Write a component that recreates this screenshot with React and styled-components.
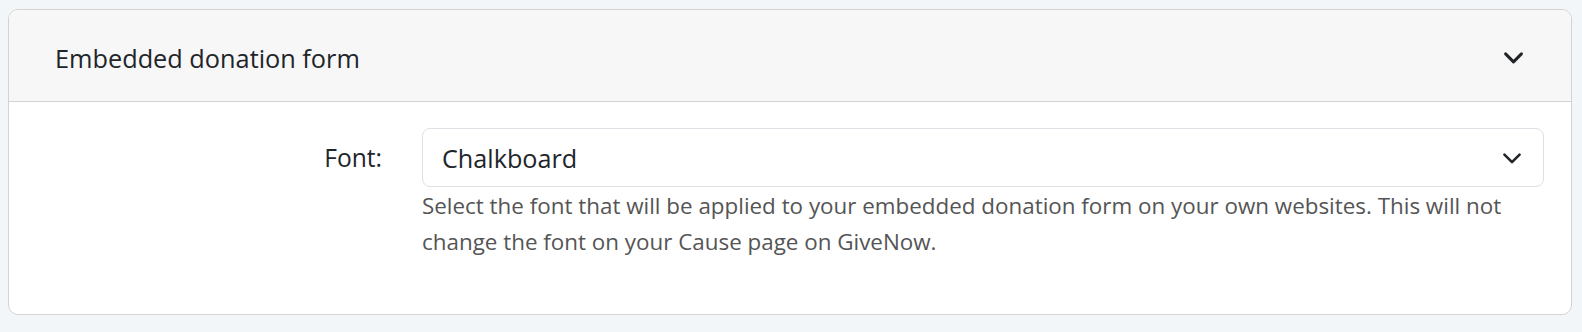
import React from 'react';
import styled, { createGlobalStyle } from 'styled-components';

const GlobalStyle = createGlobalStyle`
  html, body {
    margin: 0;
    padding: 0;
    overflow: hidden;
    background: #f3f6f9;
    font-family: "Open Sans", "Liberation Sans", sans-serif;
  }
`

// thin chevron-down, drawn to match the bootstrap-ish select arrow
const Chevron = ({ size = 22, stroke = 2 }) => (
  <svg width={size} height={size} viewBox="0 0 16 16" fill="none">
    <path d="M2.5 5.5 L8 11 L13.5 5.5" stroke="#212529" strokeWidth={stroke} strokeLinecap="round" strokeLinejoin="round" />
  </svg>
)

const App = () => {
  return (
    <>
      <GlobalStyle />
      <Page>
        <Card>
          <CardHeader>
            <Title>Embedded donation form</Title>
            <Chevron size={23} stroke={2.1} />
          </CardHeader>
          <CardBody>
            <Label htmlFor="font">Font:</Label>
            <Field>
              <SelectBox id="font">
                <span>Chalkboard</span>
                <Chevron size={22} stroke={1.9} />
              </SelectBox>
              <Help>
                Select the font that will be applied to your embedded donation form on your own websites. This will not change the font on your Cause page on GiveNow.
              </Help>
            </Field>
          </CardBody>
        </Card>
      </Page>
    </>
  )
}

const Page = styled.div`
  padding: 9px 10px 16px 8px;
`

const Card = styled.div`
  background: #fff;
  border: 1px solid #d3d3d3;
  border-radius: 10px;
  overflow: hidden;
`

const CardHeader = styled.div`
  display: flex;
  align-items: center;
  justify-content: space-between;
  height: 92px;
  padding: 4px 46px 0 46px;
  background: #f7f7f7;
  border-bottom: 1px solid #d3d3d3;
  box-sizing: border-box;
`

const Title = styled.h2`
  margin: 0;
  font-size: 25.3px;
  font-weight: 400;
  color: #212529;
`

const CardBody = styled.div`
  display: grid;
  grid-template-columns: 373px 1fr;
  column-gap: 40px;
  padding: 26px 27px 54px 0;
`

const Label = styled.label`
  text-align: right;
  font-size: 24.6px;
  color: #212529;
  line-height: 59px;
`

const Field = styled.div`
  display: flex;
  flex-direction: column;
`

const SelectBox = styled.div`
  display: flex;
  align-items: center;
  justify-content: space-between;
  height: 59px;
  padding: 0 20px 0 19px;
  border: 1px solid #dcdfe3;
  border-radius: 8px;
  box-sizing: border-box;
  font-size: 25.2px;
  color: #212529;
`

const Help = styled.p`
  margin: 1px 0 0;
  font-size: 22.4px;
  line-height: 36px;
  color: #555;
`

export default App;
